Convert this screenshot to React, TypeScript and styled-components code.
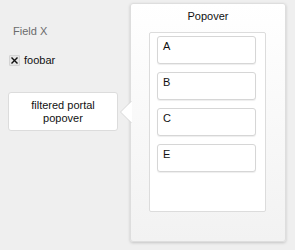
import React from "react";
import styled, { createGlobalStyle } from "styled-components";

const Global = createGlobalStyle`
  html, body { margin: 0; padding: 0; background: #efefef; }
  body { font-family: "Liberation Sans", Arial, sans-serif; font-size: 11px; color: #111; }
  * { box-sizing: border-box; }
`;

const Page = styled.div`
  display: flex;
  align-items: flex-start;
  width: 295px;
  height: 250px;
  background: #efefef;
`;

const LeftCol = styled.div`
  width: 130px;
  padding: 24px 12px 0 8px;
  display: flex;
  flex-direction: column;
`;

const FieldLabel = styled.div`
  color: #6b6b6b;
  font-size: 11px;
  line-height: 15px;
  padding-left: 5px;
`;

const Tag = styled.div`
  display: flex;
  align-items: center;
  gap: 4px;
  margin-top: 14px;
  padding-left: 1px;
  line-height: 15px;
  font-size: 11px;
  color: #111;
`;

const TagX = styled.span`
  display: inline-flex;
  align-items: center;
  justify-content: center;
  width: 11px;
  height: 11px;
  background: #e6e6e6;
  border: 1px solid #d4d4d4;
  border-radius: 1px;
`;

const Portal = styled.div`
  margin-top: 24px;
  width: 110px;
  height: 39px;
  background: #fff;
  border: 1px solid #dcdcdc;
  border-radius: 3px;
  display: flex;
  align-items: center;
  justify-content: center;
  text-align: center;
  line-height: 13px;
  font-size: 11px;
  color: #111;
`;

const Popover = styled.div`
  position: relative;
  margin-top: 3px;
  width: 156px;
  height: 239px;
  background: linear-gradient(#ffffff, #f2f2f2);
  border: 1px solid #dedede;
  border-radius: 3px;
  box-shadow: 0 1px 3px rgba(0, 0, 0, 0.18);
  display: flex;
  flex-direction: column;
  align-items: flex-start;
`;

const Arrow = styled.svg`
  position: absolute;
  left: -11px;
  top: 97px;
`;

const Title = styled.div`
  align-self: stretch;
  text-align: center;
  padding-top: 5px;
  height: 28px;
  line-height: 15px;
  font-size: 11px;
  color: #111;
`;

const Inner = styled.div`
  margin-left: 18px;
  width: 117px;
  height: 180px;
  background: #fff;
  border: 1px solid #dcdcdc;
  border-radius: 2px;
  padding: 3px 9px 0 7px;
  display: flex;
  flex-direction: column;
  gap: 8px;
`;

const Item = styled.div`
  height: 28px;
  background: #fff;
  border: 1px solid #d6d6d6;
  border-radius: 3px;
  box-shadow: 0 1px 1px rgba(0, 0, 0, 0.07);
  padding: 2px 0 0 5px;
  line-height: 15px;
  font-size: 11px;
  color: #111;
`;

export default function App() {
  return (
    <>
      <Global />
      <Page>
        <LeftCol>
          <FieldLabel>Field X</FieldLabel>
          <Tag>
            <TagX>
              <svg width="9" height="9" viewBox="0 0 9 9">
                <path d="M2 2 L7 7 M7 2 L2 7" stroke="#111" strokeWidth="1.4" strokeLinecap="square" />
              </svg>
            </TagX>
            <span>foobar</span>
          </Tag>
          <Portal>
            filtered portal
            <br />
            popover
          </Portal>
        </LeftCol>
        <Popover>
          <Arrow width="12" height="22" viewBox="0 0 12 22">
            <path d="M12 0 L0.5 11 L12 22 Z" fill="#ffffff" />
            <path d="M11.5 0 L0.5 11 L11.5 22" fill="none" stroke="#d8d8d8" strokeWidth="1" />
          </Arrow>
          <Title>Popover</Title>
          <Inner>
            {["A", "B", "C", "E"].map((l) => (
              <Item key={l}>{l}</Item>
            ))}
          </Inner>
        </Popover>
      </Page>
    </>
  );
}
